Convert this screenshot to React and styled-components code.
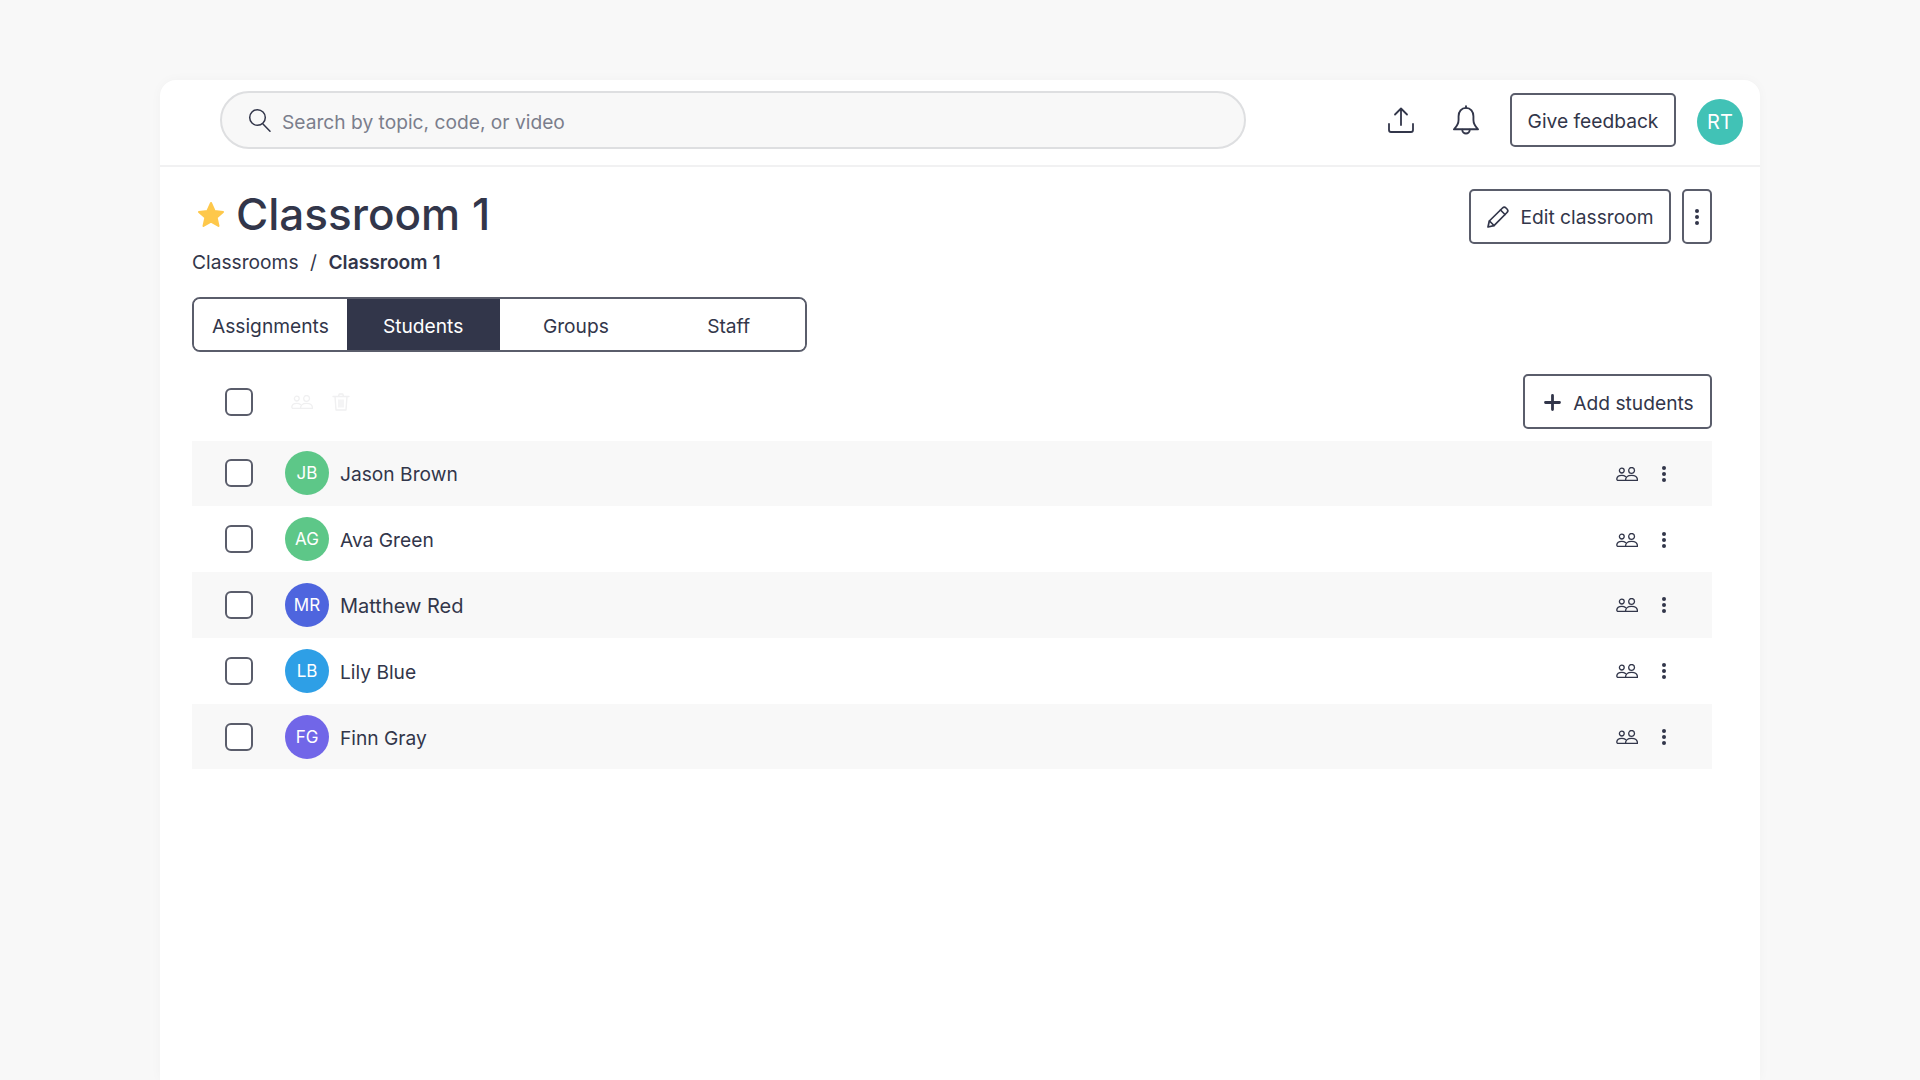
import styled, { createGlobalStyle } from 'styled-components';

const GlobalStyle = createGlobalStyle`
  html, body {
    margin: 0;
    height: 100%;
    background: #f8f8f8;
    overflow: hidden;
  }
  body {
    font-family: Inter, "Liberation Sans", sans-serif;
    color: #32364a;
  }
`;

const Page = styled.div`
  height: 1080px;
  padding: 80px 160px 0;
  box-sizing: border-box;
`;

const Card = styled.div`
  height: 1000px;
  background: #fff;
  border-radius: 16px 16px 0 0;
  box-shadow: 0 0 12px rgba(0, 0, 0, 0.03);
`;

const TopBar = styled.header`
  height: 87px;
  box-sizing: border-box;
  border-bottom: 2px solid #f1f1f2;
  display: flex;
  align-items: center;
  padding: 0 17px 5px 60px;
`;

const SearchBox = styled.div`
  width: 1026px;
  height: 58px;
  box-sizing: border-box;
  border: 2px solid #dedfe1;
  border-radius: 29px;
  background: #f8f8f8;
  display: flex;
  align-items: center;
  padding-left: 26px;
  gap: 11px;
  font-size: 19.2px;
  color: #7b7e8c;
`;

const SearchText = styled.span`
  margin-top: 3px;
`;

const TopIcons = styled.div`
  margin-left: auto;
  display: flex;
  align-items: center;
`;

const IconSlot = styled.div`
  display: flex;
  margin-right: ${p => p.$gap}px;
  color: #32364a;
`;

const OutlineButton = styled.button`
  height: 54.5px;
  box-sizing: border-box;
  width: ${p => p.$width}px;
  border: 2px solid #5a5d6b;
  border-radius: 5px;
  background: #fff;
  font: 400 19.2px Inter, "Liberation Sans", sans-serif;
  color: #32364a;
  display: flex;
  align-items: center;
  justify-content: center;
  gap: ${p => p.$gap || 0}px;
  padding: 2px 0 0;
`;

const UserAvatar = styled.div`
  width: 46px;
  height: 46px;
  margin: 4px 0 0 21px;
  border-radius: 50%;
  background: #41c2b6;
  color: #fff;
  font-size: 20px;
  display: flex;
  align-items: center;
  justify-content: center;
`;

const Content = styled.main`
  padding: 0 48px 0 32px;
`;

const TitleRow = styled.div`
  display: flex;
  justify-content: space-between;
  padding-top: 22px;
`;

const TitleBlock = styled.div`
  display: flex;
  flex-direction: column;
`;

const Heading = styled.h1`
  margin: -1px 0 0 4px;
  font-size: 44px;
  line-height: 53px;
  font-weight: 500;
  display: flex;
  align-items: center;
  gap: 10px;
`;

const Crumbs = styled.div`
  margin-top: 7px;
  font-size: 19.2px;
  line-height: 28px;
  display: flex;
  gap: 11.5px;
`;

const CrumbCurrent = styled.span`
  font-weight: 600;
`;

const TitleActions = styled.div`
  display: flex;
  gap: 11px;
`;

const Tabs = styled.div`
  margin-top: 21px;
  width: 615px;
  height: 55px;
  box-sizing: border-box;
  border: 2px solid #5a5d6b;
  border-radius: 8px;
  display: grid;
  grid-template-columns: repeat(4, 1fr);
  overflow: hidden;
`;

const Tab = styled.div`
  display: flex;
  align-items: center;
  justify-content: center;
  padding-top: 2px;
  font-size: 19.2px;
  background: ${p => (p.$active ? '#32364a' : '#fff')};
  color: ${p => (p.$active ? '#fff' : '#32364a')};
`;

const Toolbar = styled.div`
  margin-top: 22px;
  height: 55px;
  display: flex;
  align-items: center;
  padding-left: 33px;
`;

const BulkIcons = styled.div`
  display: flex;
  align-items: center;
  gap: 19px;
  margin-left: 38px;
  color: #f0f0f1;
`;

const Check = styled.div`
  width: 28px;
  height: 28px;
  box-sizing: border-box;
  border: 2px solid #5a5d6b;
  border-radius: 6px;
  background: #fff;
  flex: none;
`;

const AddButton = styled(OutlineButton)`
  margin-left: auto;
  padding-left: 3px;
`;

const List = styled.div`
  margin-top: 11.5px;
`;

const Row = styled.div`
  height: 65.8px;
  display: flex;
  align-items: center;
  padding: 0 45px 0 33px;
  background: ${p => (p.$shaded ? '#f8f8f8' : '#fff')};
`;

const Avatar = styled.div`
  width: 44px;
  height: 44px;
  margin-left: 32px;
  border-radius: 50%;
  background: ${p => p.$color};
  color: #fff;
  font-size: 17px;
  display: flex;
  align-items: center;
  justify-content: center;
  flex: none;
`;

const Name = styled.div`
  margin: 2px 0 0 11px;
  font-size: ${p => p.$size}px;
`;

const RowActions = styled.div`
  margin: 1px 0 0 auto;
  display: flex;
  align-items: center;
  gap: 23px;
`;

const SearchIcon = () => (
  <svg width="23" height="24" viewBox="0 0 23 24" fill="none" stroke="#32364a" strokeWidth="1.5" strokeLinecap="round">
    <circle cx="9.500" cy="9.500" r="7.800" />
    <path d="M15 16l7 7.300" />
  </svg>
);

const UploadIcon = () => (
  <svg width="26" height="26" viewBox="0 0 26 26" fill="none" stroke="currentColor" strokeWidth="1.800" strokeLinecap="round" strokeLinejoin="round">
    <path d="M13 1.500v16.500M7 7.500l6-6 6 6" />
    <path d="M1 17v6a2 2 0 0 0 2 2h20a2 2 0 0 0 2-2v-6" />
  </svg>
);

const BellIcon = () => (
  <svg width="26" height="30" viewBox="0 0 28 32" fill="none" stroke="currentColor" strokeWidth="2" strokeLinejoin="round" strokeLinecap="round">
    <path d="M14 3c-5 0-8 4-8 9v4c0 4-2 7-5 10h26c-3-3-5-6-5-10v-4c0-5-3-9-8-9z" />
    <path d="M14 1v2M10 26.500c0 2.500 2 4 4 4s4-1.500 4-4" />
  </svg>
);

const PencilIcon = () => (
  <svg width="22" height="22" viewBox="0 0 22 22" fill="none" stroke="currentColor" strokeWidth="1.700" strokeLinejoin="round" strokeLinecap="round">
    <path d="M1 21l1.300-6L15.500 2a2.500 2.500 0 0 1 3.500 0l1 1a2.500 2.500 0 0 1 0 3.500L7 19.700 1 21z" />
    <path d="M13.500 4l4.500 4.500M2.500 15l4.500 4.500" />
  </svg>
);

const DotsIcon = () => (
  <svg width="6" height="18" viewBox="0 0 6 18" fill="currentColor">
    <circle cx="3" cy="3" r="2" />
    <circle cx="3" cy="9" r="2" />
    <circle cx="3" cy="15" r="2" />
  </svg>
);

const StarIcon = () => (
  <svg width="30" height="30" viewBox="0 0 30 30" fill="#fec84b" stroke="#fec84b" strokeWidth="2" strokeLinejoin="round">
    <path d="M15 3l3.600 8 8.400.9-6.300 5.700 1.800 8.400L15 21.700 7.500 26l1.800-8.400L3 11.900l8.400-.9z" />
  </svg>
);

const PlusIcon = () => (
  <svg width="17" height="17" viewBox="0 0 17 17" fill="none" stroke="currentColor" strokeWidth="2.800" strokeLinecap="round">
    <path d="M8.500 1.500v14M1.500 8.500h14" />
  </svg>
);

const PeopleIcon = () => (
  <svg width="22" height="14" viewBox="0 0 22 14" fill="none" stroke="currentColor" strokeWidth="1.300" strokeLinecap="round" strokeLinejoin="round">
    <circle cx="5.800" cy="3.600" r="2.400" />
    <circle cx="15.600" cy="3.400" r="2.900" />
    <path d="M9.500 13.300H2.200a1.300 1.300 0 0 1-1.400-1.400c.2-2 2-3.600 5-3.600 1.500 0 2.800.4 3.700 1.200" />
    <path d="M9.500 13.300c0-3 2.300-5 6.100-5s5.900 2 5.900 5z" />
  </svg>
);

const TrashIcon = () => (
  <svg width="18" height="18" viewBox="0 0 18 18" fill="none" stroke="currentColor" strokeWidth="1.400" strokeLinecap="round" strokeLinejoin="round">
    <path d="M1 3.500h16M6.500 3.500l.7-2.500h3.600l.7 2.500M3 3.500l1 13.500h10l1-13.500M7 7v7M9 7v7M11 7v7" />
  </svg>
);

const students = [
  { initials: 'JB', name: 'Jason Brown', color: '#5dc788', size: 19.2 },
  { initials: 'AG', name: 'Ava Green', color: '#5dc788', size: 19.2 },
  { initials: 'MR', name: 'Matthew Red', color: '#4e65de', size: 20 },
  { initials: 'LB', name: 'Lily Blue', color: '#2e9fe6', size: 19.2 },
  { initials: 'FG', name: 'Finn Gray', color: '#7166e8', size: 19.2 },
];

export default function App() {
  return (
    <Page>
      <GlobalStyle />
      <Card>
        <TopBar>
          <SearchBox>
            <SearchIcon />
            <SearchText>Search by topic, code, or video</SearchText>
          </SearchBox>
          <TopIcons>
            <IconSlot $gap={39}><UploadIcon /></IconSlot>
            <IconSlot $gap={31}><BellIcon /></IconSlot>
            <OutlineButton $width={166}>Give feedback</OutlineButton>
            <UserAvatar>RT</UserAvatar>
          </TopIcons>
        </TopBar>
        <Content>
          <TitleRow>
            <TitleBlock>
              <Heading><StarIcon />Classroom 1</Heading>
              <Crumbs>
                <span>Classrooms</span>
                <span>/</span>
                <CrumbCurrent>Classroom 1</CrumbCurrent>
              </Crumbs>
            </TitleBlock>
            <TitleActions>
              <OutlineButton $width={202} $gap={12}><PencilIcon />Edit classroom</OutlineButton>
              <OutlineButton $width={30}><DotsIcon /></OutlineButton>
            </TitleActions>
          </TitleRow>
          <Tabs>
            <Tab>Assignments</Tab>
            <Tab $active>Students</Tab>
            <Tab>Groups</Tab>
            <Tab>Staff</Tab>
          </Tabs>
          <Toolbar>
            <Check />
            <BulkIcons>
              <PeopleIcon />
              <TrashIcon />
            </BulkIcons>
            <AddButton $width={189} $gap={12}><PlusIcon />Add students</AddButton>
          </Toolbar>
          <List>
            {students.map((s, i) => (
              <Row key={s.name} $shaded={i % 2 === 0}>
                <Check />
                <Avatar $color={s.color}>{s.initials}</Avatar>
                <Name $size={s.size}>{s.name}</Name>
                <RowActions>
                  <PeopleIcon />
                  <DotsIcon />
                </RowActions>
              </Row>
            ))}
          </List>
        </Content>
      </Card>
    </Page>
  );
}
